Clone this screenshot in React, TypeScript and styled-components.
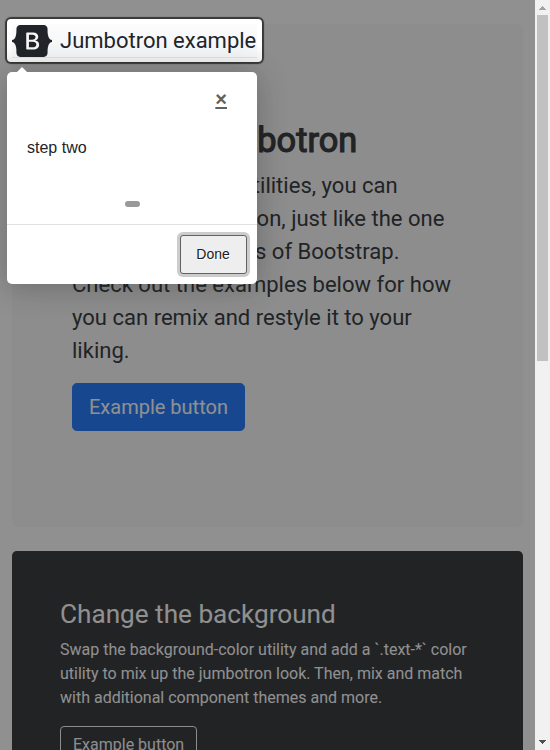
import React from "react";
import styled, { createGlobalStyle } from "styled-components";

const GlobalStyle = createGlobalStyle`
  * { box-sizing: border-box; }
  html, body { margin: 0; height: 100%; overflow: hidden; }
  body {
    font-family: Roboto, "Liberation Sans", sans-serif;
    font-size: 16px;
    line-height: 1.5;
    color: #212529;
    background: #fff;
  }
  h1, h2, p { margin: 0; }
`;

const Window = styled.div`
  position: relative;
  display: flex;
  width: 550px;
  height: 750px;
  overflow: hidden;
`;

const Page = styled.main`
  position: relative;
  display: flex;
  flex-direction: column;
  gap: 24px;
  width: 535px;
  height: 750px;
  padding: 24px 12px 0;
  overflow: hidden;
`;

const Panel = styled.section<{ $dark?: boolean }>`
  flex: none;
  padding: ${(p) => (p.$dark ? "48px" : "96px 60px")};
  height: ${(p) => (p.$dark ? "260px" : "503px")};
  border-radius: 4.8px;
  color: ${(p) => (p.$dark ? "#fff" : "#212529")};
  background: ${(p) => (p.$dark ? "#212529" : "#f8f9fa")};
`;

const Display = styled.h1`
  margin-bottom: 8px;
  font-size: 34.35px;
  font-weight: 400;
  line-height: 1.2;
  -webkit-text-stroke: 1.2px #212529;
`;

const Lead = styled.p`
  margin-bottom: 16px;
  font-size: 22.05px;
  line-height: 33px;
`;

const Title = styled.h2`
  margin-bottom: 8px;
  font-size: 26.15px;
  font-weight: 400;
  line-height: 1.2;
`;

const Copy = styled.p`
  margin-bottom: 16px;
`;

const Button = styled.button<{ $outline?: boolean }>`
  padding: ${(p) => (p.$outline ? "6px 12px" : "8px 16px")};
  border: 1px solid ${(p) => (p.$outline ? "#f8f9fa" : "#0d6efd")};
  border-radius: ${(p) => (p.$outline ? "4px" : "4.8px")};
  font: inherit;
  font-size: ${(p) => (p.$outline ? "16px" : "20px")};
  line-height: 1.5;
  color: ${(p) => (p.$outline ? "#f8f9fa" : "#fff")};
  background: ${(p) => (p.$outline ? "transparent" : "#0d6efd")};
`;

const Highlight = styled.div`
  position: absolute;
  left: 7px;
  top: 19px;
  width: 255px;
  height: 43px;
  padding: 5px 5px 0;
  border-radius: 4px;
  background: #fff linear-gradient(#fff 60%, #f1f1f1);
  box-shadow: 0 0 1px 2px rgba(33, 33, 33, 0.8), 0 0 0 5000px rgba(33, 33, 33, 0.5);
`;

const Brand = styled.header`
  display: flex;
  align-items: center;
  gap: 8px;
  height: 34px;
  border-bottom: 1px solid #dee2e6;
  background: linear-gradient(#fcfcfd, #f3f4f6);
  font-size: 22px;
  white-space: nowrap;
`;

const Tooltip = styled.div`
  position: absolute;
  left: 7px;
  top: 72px;
  width: 250px;
  height: 212px;
  display: flex;
  flex-direction: column;
  border-radius: 5px;
  background: #fff;
  box-shadow: 0 3px 30px rgba(33, 33, 33, 0.3);
  font-family: "Liberation Sans", Arial, sans-serif;
  &::before {
    content: "";
    position: absolute;
    top: -10px;
    left: 10px;
    border: 5px solid transparent;
    border-bottom-color: #fff;
  }
`;

const TooltipHeader = styled.div`
  display: flex;
  justify-content: flex-end;
  height: 56px;
  padding: 10px 30px 0 0;
`;

const Close = styled.span`
  font: 700 20px/34px "Liberation Sans", Arial, sans-serif;
  color: #616161;
  text-decoration: underline;
`;

const TooltipText = styled.div`
  padding: 8px 20px 0;
  height: 73px;
  line-height: 24px;
`;

const Bullet = styled.div`
  flex: none;
  width: 15px;
  height: 6px;
  margin: 0 auto;
  border-radius: 10px;
  background: #999;
`;

const TooltipFooter = styled.div`
  display: flex;
  justify-content: flex-end;
  margin-top: 17px;
  padding: 10px 10px 0;
  border-top: 1px solid #e0e0e0;
`;

const Done = styled.button`
  width: 67px;
  height: 39px;
  padding: 0 1px 2px 0;
  border: 1px solid #616161;
  border-radius: 3px;
  font: 14px "Liberation Sans", Arial, sans-serif;
  color: #212121;
  text-shadow: 1px 1px 0 #fff;
  background: #eee;
  box-shadow: 0 0 0 3px rgba(191, 191, 191, 0.8);
`;

const Scrollbar = styled.aside`
  position: relative;
  display: flex;
  flex-direction: column;
  align-items: center;
  width: 15px;
  height: 750px;
  background: #f1f1f1;
`;

const Arrow = styled.svg`
  flex: none;
  width: 15px;
  height: 15px;
`;

const Track = styled.div`
  flex: 1;
  width: 11px;
`;

const Thumb = styled.div`
  height: 346px;
  background: #c1c1c1;
`;

const Logo = () => (
  <svg width="40" height="32" viewBox="0 0 118 94">
    <path
      fill="#212529"
      fillRule="evenodd"
      clipRule="evenodd"
      d="M24.509 0c-6.733 0-11.715 5.893-11.492 12.284.214 6.14-.064 14.092-2.066 20.577C8.943 39.365 5.547 43.485 0 44.014v5.972c5.547.529 8.943 4.649 10.951 11.153 2.002 6.485 2.28 14.437 2.066 20.577C12.794 88.106 17.776 94 24.51 94H93.5c6.733 0 11.714-5.893 11.491-12.284-.214-6.14.064-14.092 2.066-20.577 2.009-6.504 5.396-10.624 10.943-11.153v-5.972c-5.547-.529-8.934-4.649-10.943-11.153-2.002-6.484-2.28-14.437-2.066-20.577C105.214 5.894 100.233 0 93.5 0H24.508zM80 57.863C80 66.663 73.436 72 62.543 72H44a2 2 0 01-2-2V24a2 2 0 012-2h18.437c9.083 0 15.044 4.92 15.044 12.474 0 5.302-4.01 10.049-9.119 10.88v.277C75.317 46.394 80 51.21 80 57.863zM60.521 28.34H49.948v14.934h8.905c6.884 0 10.68-2.772 10.68-7.727 0-4.643-3.264-7.207-9.012-7.207zM49.948 49.2v16.458H60.91c7.167 0 10.964-2.876 10.964-8.281 0-5.406-3.903-8.178-11.425-8.178H49.948z"
    />
  </svg>
);

export default function App() {
  return (
    <>
      <GlobalStyle />
      <Window>
        <Page>
          <Panel>
            <Display>Custom jumbotron</Display>
            <Lead>
              Using a series of utilities, you can create this jumbotron, just like the one in
              previous versions of Bootstrap. Check out the examples below for how you can remix
              and restyle it to your liking.
            </Lead>
            <Button>Example button</Button>
          </Panel>
          <Panel $dark>
            <Title>Change the background</Title>
            <Copy>
              Swap the background-color utility and add a `.text-*` color utility to mix up the
              jumbotron look. Then, mix and match with additional component themes and more.
            </Copy>
            <Button $outline>Example button</Button>
          </Panel>
          <Highlight>
            <Brand>
              <Logo />
              <span>Jumbotron example</span>
            </Brand>
          </Highlight>
          <Tooltip>
            <TooltipHeader>
              <Close>×</Close>
            </TooltipHeader>
            <TooltipText>step two</TooltipText>
            <Bullet />
            <TooltipFooter>
              <Done>Done</Done>
            </TooltipFooter>
          </Tooltip>
        </Page>
        <Scrollbar>
          <Arrow viewBox="0 0 15 15" shapeRendering="crispEdges">
            <path d="M7 6h1v1h1v1h1v1h1v1H4V9h1V8h1V7h1z" fill="#a3a3a3" />
          </Arrow>
          <Track>
            <Thumb />
          </Track>
          <Arrow viewBox="0 0 15 15" shapeRendering="crispEdges">
            <path d="M4 5h7v1h-1v1H9v1H8v1H7V8H6V7H5V6H4z" fill="#505050" />
          </Arrow>
        </Scrollbar>
      </Window>
    </>
  );
}
